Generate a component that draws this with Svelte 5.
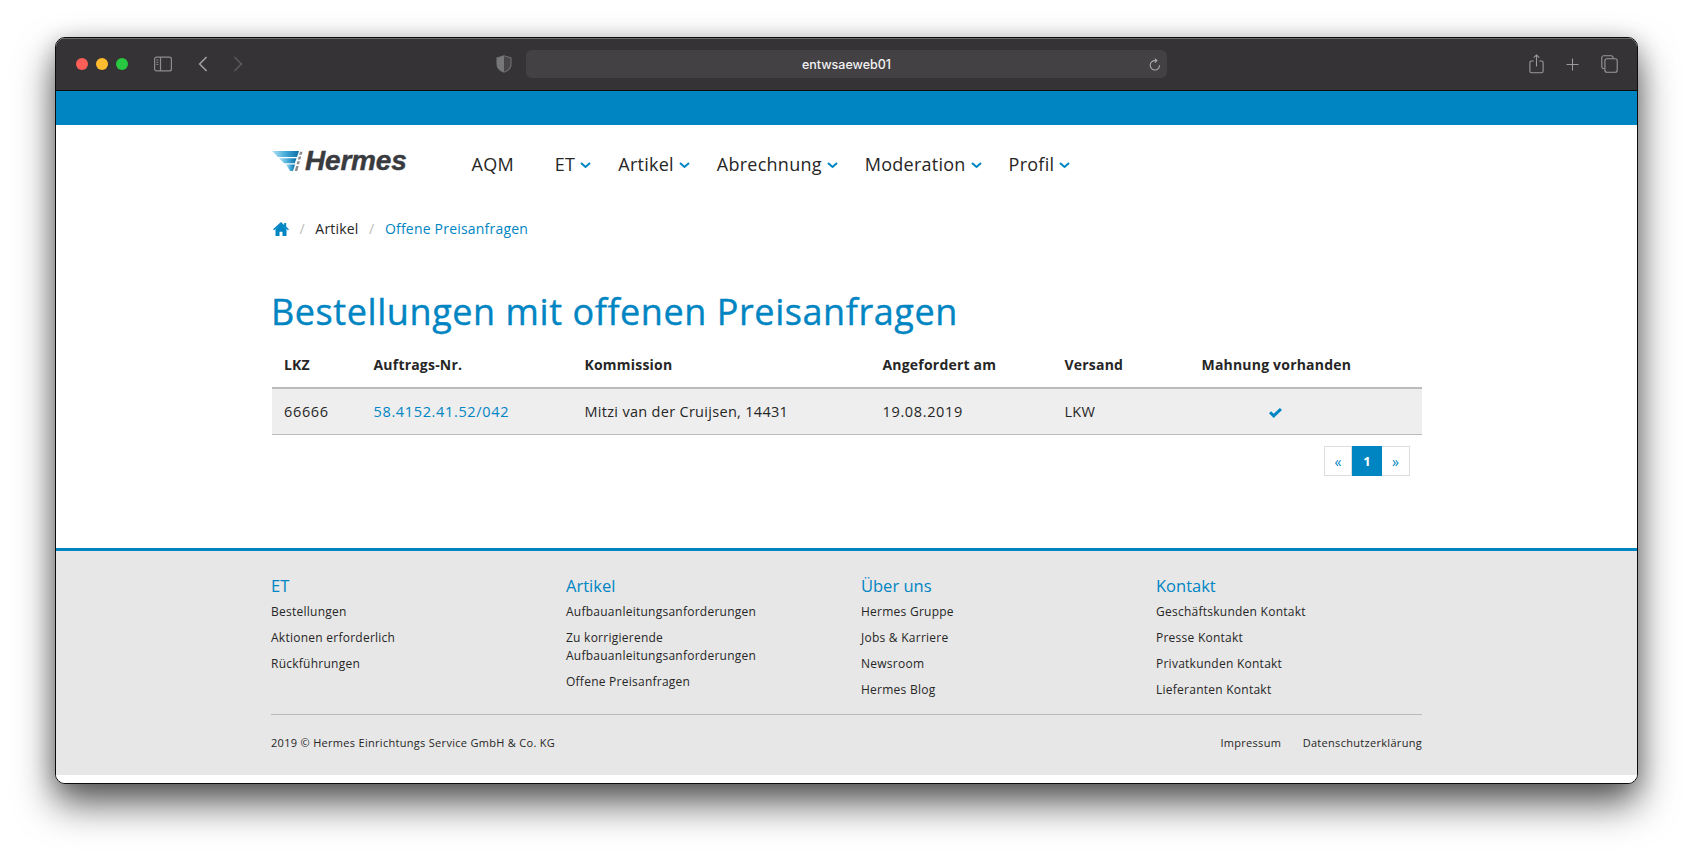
<script>
  const navItems = [
    { label: 'AQM', caret: false },
    { label: 'ET', caret: true },
    { label: 'Artikel', caret: true },
    { label: 'Abrechnung', caret: true },
    { label: 'Moderation', caret: true },
    { label: 'Profil', caret: true },
  ];

  const footerColumns = [
    { title: 'ET', links: ['Bestellungen', 'Aktionen erforderlich', 'Rückführungen'] },
    {
      title: 'Artikel',
      links: ['Aufbauanleitungsanforderungen', 'Zu korrigierende Aufbauanleitungsanforderungen', 'Offene Preisanfragen'],
    },
    { title: 'Über uns', links: ['Hermes Gruppe', 'Jobs & Karriere', 'Newsroom', 'Hermes Blog'] },
    { title: 'Kontakt', links: ['Geschäftskunden Kontakt', 'Presse Kontakt', 'Privatkunden Kontakt', 'Lieferanten Kontakt'] },
  ];
</script>

<div class="stage">
  <div class="window">
    <header class="toolbar">
      <div class="lights">
        <span class="light red"></span>
        <span class="light yellow"></span>
        <span class="light green"></span>
      </div>
      <svg class="tool sidebar" width="20" height="16" viewBox="0 0 20 16" fill="none" stroke="#8d8c8e" stroke-width="1.2">
        <rect x="1.6" y="1.1" width="16.8" height="13.8" rx="2" />
        <path d="M7.5 1.1v13.8" />
        <path d="M3.4 4h2M3.4 6.2h2M3.4 8.4h2" stroke-width="1" />
      </svg>
      <svg class="tool back" width="10" height="16" viewBox="0 0 10 16" fill="none" stroke="#a3a2a4" stroke-width="1.5">
        <path d="M8.6 1 1.6 8l7 7" />
      </svg>
      <svg class="tool forward" width="10" height="16" viewBox="0 0 10 16" fill="none" stroke="#5c5b5e" stroke-width="1.5">
        <path d="M1.4 1l7 7-7 7" />
      </svg>
      <svg class="tool shield" width="16" height="18" viewBox="0 0 16 18">
        <path d="M8 .8 1 3v6c0 4 3 6.8 7 8.2 4-1.4 7-4.2 7-8.2V3z" fill="#474548" stroke="#6c6b6d" stroke-width="1.2" />
        <path d="M8 .8 1 3v6c0 4 3 6.8 7 8.2z" fill="#777678" />
      </svg>
      <div class="url">
        <span class="url-text">entwsaeweb01</span>
        <svg class="reload" width="12" height="13" viewBox="0 0 12 13" fill="none" stroke="#a9a8aa" stroke-width="1.1">
          <path d="M10.6 7.2A4.7 4.7 0 1 1 6 2.6h1.600" />
          <path d="M5.900.6l2 2-2 2" />
        </svg>
      </div>
      <div class="tools-right">
        <svg width="15" height="20" viewBox="0 0 15 20" fill="none" stroke="#9a999b" stroke-width="1.1">
          <path d="M4.600 7H2.400a1.500 1.500 0 0 0-1.500 1.500v8.800a1.500 1.500 0 0 0 1.500 1.500h10.200a1.500 1.500 0 0 0 1.500-1.500V8.500A1.500 1.500 0 0 0 12.600 7h-2.200" />
          <path d="M7.500 12.500V1M4.700 3.600 7.500.9l2.800 2.700" />
        </svg>
        <svg width="13" height="13" viewBox="0 0 13 13" fill="none" stroke="#9a999b" stroke-width="1.1">
          <path d="M6.500.5v12M.5 6.500h12" />
        </svg>
        <svg width="17" height="18" viewBox="0 0 17 18" fill="none" stroke="#9a999b" stroke-width="1.1">
          <path d="M3.300 13.500H2.500A1.800 1.800 0 0 1 .8 11.700V2.600A1.800 1.800 0 0 1 2.500.8h7.800a1.800 1.800 0 0 1 1.800 1.800v.8" />
          <rect x="3.900" y="3.700" width="12.300" height="13.500" rx="2" />
        </svg>
      </div>
    </header>

    <div class="topbar"></div>

    <main class="main">
      <div class="container">
        <nav class="nav">
          <a class="logo" href="#top" aria-label="Hermes">
            <svg width="33" height="21" viewBox="0 0 33 21">
              <defs>
                <linearGradient id="wing" x1="0" y1="0" x2="1" y2="0">
                  <stop offset="0" stop-color="#b5e2f3" />
                  <stop offset="0.5" stop-color="#45abd9" />
                  <stop offset="1" stop-color="#0a6ea6" />
                </linearGradient>
              </defs>
              <path d="M1 0h27l-2 6H7z" fill="url(#wing)" />
              <path d="M8 7.200h17.500l-1.800 5H13z" fill="url(#wing)" />
              <path d="M15 13.500h9l-2 6.500h-3z" fill="url(#wing)" />
              <path d="M29 .8h2.500l-.8 3h-2.500zM27.700 5.500h2.500l-.8 3h-2.500zM26.400 10.200h2.500l-.8 3h-2.500zM25.100 15h2.500l-1.300 5h-2.500z" fill="#8a8c8e" />
            </svg>
            <span class="logo-text">Hermes</span>
          </a>
          <ul class="nav-list">
            {#each navItems as item}
              <li class="nav-item" class:plain={!item.caret}>
                <span>{item.label}</span>
                {#if item.caret}
                  <svg class="caret" width="11" height="7" viewBox="0 0 11 7" fill="none" stroke="#0085c3" stroke-width="2">
                    <path d="M1 1l4.500 4 4.500-4" />
                  </svg>
                {/if}
              </li>
            {/each}
          </ul>
        </nav>

        <ol class="crumbs">
          <li>
            <svg width="16" height="14" viewBox="0 0 16 14" fill="#0085c3">
              <path d="M8 0 0 7.200l1 1.100L8 2.300l7 6 1-1.100-2.800-2.500V1h-2v1.900z" />
              <path d="M8 1.500 2.500 7V14h4V9.800h3V14h4V7z" />
            </svg>
          </li>
          <li class="sep">/</li>
          <li class="crumb">Artikel</li>
          <li class="sep">/</li>
          <li class="crumb current">Offene Preisanfragen</li>
        </ol>

        <h1>Bestellungen mit offenen Preisanfragen</h1>

        <table>
          <colgroup>
            <col style="width: 89.500px" />
            <col style="width: 211px" />
            <col style="width: 298px" />
            <col style="width: 182px" />
            <col style="width: 137px" />
            <col style="width: 172px" />
            <col />
          </colgroup>
          <thead>
            <tr>
              <th>LKZ</th>
              <th>Auftrags-Nr.</th>
              <th>Kommission</th>
              <th>Angefordert am</th>
              <th>Versand</th>
              <th class="centered">Mahnung vorhanden</th>
              <th></th>
            </tr>
          </thead>
          <tbody>
            <tr>
              <td class="num">66666</td>
              <td class="num"><span class="link">58.4152.41.52/042</span></td>
              <td>Mitzi van der Cruijsen, 14431</td>
              <td class="num">19.08.2019</td>
              <td>LKW</td>
              <td class="centered">
                <svg class="check" width="13" height="10" viewBox="0 0 13 10" fill="#0085c3">
                  <path d="M4.700 10 0 5.300l2.100-2.100 2.600 2.600L10.900 0 13 2.100z" />
                </svg>
              </td>
              <td></td>
            </tr>
          </tbody>
        </table>

        <div class="pager">
          <span class="page">«</span>
          <span class="page active">1</span>
          <span class="page">»</span>
        </div>
      </div>
    </main>

    <footer class="footer">
      <div class="footer-inner">
        <div class="footer-cols">
          {#each footerColumns as col}
            <div class="footer-col">
              <h4>{col.title}</h4>
              <ul>
                {#each col.links as link}
                  <li>{link}</li>
                {/each}
              </ul>
            </div>
          {/each}
        </div>
        <div class="legal">
          <span>2019 © Hermes Einrichtungs Service GmbH &amp; Co. KG</span>
          <span class="legal-links">
            <span>Impressum</span>
            <span>Datenschutzerklärung</span>
          </span>
        </div>
      </div>
    </footer>
    <div class="window-foot"></div>
  </div>
</div>

<style>
  :global(body) {
    margin: 0;
    background: #fff;
  }

  .stage {
    height: 857px;
    box-sizing: border-box;
    padding: 37px 55px 0;
    overflow: hidden;
    font-family: 'Open Sans', 'DejaVu Sans', sans-serif;
    color: #262626;
  }

  .window {
    border: 1px solid #0c0c0c;
    border-radius: 10px;
    overflow: hidden;
    background: #fff;
    box-shadow: 0 20px 38px rgba(0, 0, 0, 0.62), 0 4px 22px rgba(0, 0, 0, 0.22);
  }

  .toolbar {
    height: 52px;
    background: #353336;
    border-bottom: 1px solid #0e0e0e;
    box-shadow: inset 0 1px 0 #6a696b;
    display: flex;
    align-items: center;
    padding-left: 20px;
  }

  .lights {
    display: flex;
    gap: 8px;
  }

  .light {
    width: 12px;
    height: 12px;
    border-radius: 50%;
  }

  .red { background: #ff5f57; }
  .yellow { background: #febc2e; }
  .green { background: #28c840; }

  .tool {
    flex: none;
  }

  .sidebar { margin-left: 25px; }
  .back { margin-left: 25px; }
  .forward { margin-left: 25px; }
  .shield { margin-left: 253px; }

  .url {
    position: relative;
    width: 641px;
    height: 28px;
    margin-left: 14px;
    background: #434144;
    border-radius: 6px;
    display: flex;
    align-items: center;
    justify-content: center;
  }

  .url-text {
    font-family: Inter, 'Liberation Sans', sans-serif;
    font-size: 12.500px;
    font-weight: 500;
    color: #f2f2f2;
  }

  .reload {
    position: absolute;
    right: 6px;
    top: 8px;
  }

  .tools-right {
    display: flex;
    align-items: center;
    gap: 22px;
    margin-left: 362px;
  }

  .topbar {
    height: 34px;
    background: #0085c3;
  }

  .main {
    height: 423px;
    padding-left: 215px;
  }

  .container {
    width: 1151px;
  }

  .nav {
    display: flex;
    align-items: flex-start;
    height: 74px;
  }

  .logo {
    display: flex;
    align-items: flex-start;
    padding-top: 26px;
    text-decoration: none;
  }

  .logo svg {
    flex: none;
  }

  .logo-text {
    font-family: 'Liberation Sans', Arial, sans-serif;
    font-weight: 700;
    font-style: italic;
    font-size: 28px;
    line-height: 20px;
    margin-left: 1px;
    letter-spacing: -0.2px;
    color: #3a3b3f;
    -webkit-text-stroke: 0.4px #3a3b3f;
  }

  .nav-list {
    display: flex;
    list-style: none;
    margin: 0 0 0 65px;
    padding: 0;
    gap: 27px;
  }

  .nav-item {
    display: flex;
    align-items: center;
    gap: 5px;
    font-size: 18px;
    line-height: 24px;
    letter-spacing: 0.25px;
    padding-top: 27px;
  }

  .nav-item.plain {
    margin-right: 14px;
  }

  .caret {
    margin-top: 2px;
  }

  .crumbs {
    display: flex;
    align-items: center;
    list-style: none;
    margin: 0;
    padding: 20px 0 0 2px;
    font-size: 14px;
    line-height: 20px;
    letter-spacing: 0.2px;
  }

  .crumbs svg {
    display: block;
  }

  .sep {
    margin: 0 10.500px;
    color: #bbb;
  }

  .current {
    color: #0085c3;
  }

  h1 {
    margin: 49px 0 1px;
    font-size: 36px;
    line-height: 48px;
    font-weight: 400;
    letter-spacing: 0.57px;
    color: #0085c3;
    -webkit-text-stroke: 0.4px #0085c3;
  }

  table {
    width: 1150px;
    margin-left: 1px;
    border-collapse: collapse;
    table-layout: fixed;
    font-size: 14.500px;
    letter-spacing: 0.3px;
  }

  th {
    height: 51px;
    padding: 4px 12px 0;
    box-sizing: border-box;
    text-align: left;
    font-size: 14px;
    font-weight: 700;
    letter-spacing: 0.2px;
    white-space: nowrap;
    border-bottom: 2px solid #bbb;
  }

  td {
    height: 45px;
    padding: 0 12px;
    background: #eee;
    border-bottom: 1px solid #bbb;
    white-space: nowrap;
  }

  .num {
    letter-spacing: 0.65px;
  }

  .centered {
    text-align: center;
  }

  .link {
    color: #0085c3;
  }

  .check {
    vertical-align: -1px;
  }

  .pager {
    display: flex;
    justify-content: flex-end;
    margin: 11px 12px 0 0;
    font-size: 14px;
  }

  .page {
    box-sizing: border-box;
    height: 30px;
    width: 28px;
    display: flex;
    align-items: center;
    justify-content: center;
    background: #fff;
    color: #0085c3;
    border: 1px solid #ddd;
  }

  .page + .page {
    border-left: 0;
  }

  .page.active {
    width: 30px;
    border: 0;
    background: #0085c3;
    color: #fff;
    font-size: 13px;
    font-weight: 700;
  }

  .footer {
    height: 224px;
    background: #e7e7e7;
    border-top: 3px solid #0085c3;
    padding-left: 215px;
  }

  .footer-inner {
    width: 1151px;
  }

  .footer-cols {
    display: grid;
    grid-template-columns: repeat(4, 295px);
    height: 164px;
    padding-top: 21px;
    box-sizing: border-box;
    border-bottom: 1px solid #bbb;
  }

  .footer-col {
    width: 220px;
  }

  h4 {
    margin: 0;
    font-size: 16.500px;
    line-height: 27px;
    font-weight: 400;
    color: #0085c3;
  }

  .footer-col ul {
    list-style: none;
    margin: 0;
    padding: 0;
  }

  .footer-col li {
    font-size: 12px;
    line-height: 18px;
    margin: 4px 0 8px;
    letter-spacing: 0.25px;
  }

  .legal {
    display: flex;
    justify-content: space-between;
    align-items: center;
    height: 54px;
    font-size: 11px;
    letter-spacing: 0.3px;
  }

  .legal-links {
    display: flex;
    gap: 21.500px;
  }

  .window-foot {
    height: 8px;
    background: #fff;
  }
</style>
